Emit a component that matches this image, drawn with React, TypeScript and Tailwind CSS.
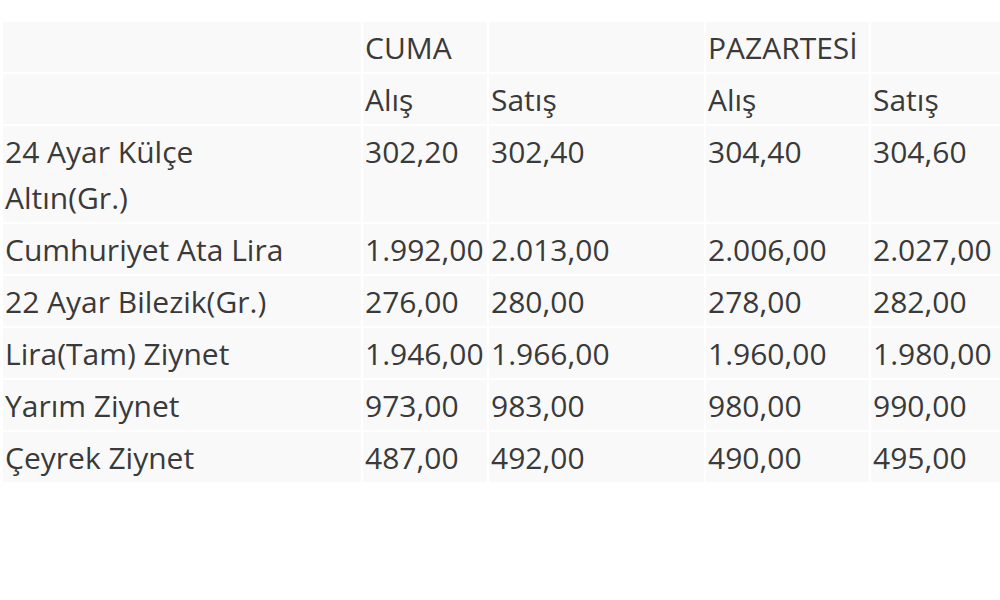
import React from "react";

const rows: [string, string, string, string, string][] = [
  ["24 Ayar Külçe Altın(Gr.)", "302,20", "302,40", "304,40", "304,60"],
  ["Cumhuriyet Ata Lira", "1.992,00", "2.013,00", "2.006,00", "2.027,00"],
  ["22 Ayar Bilezik(Gr.)", "276,00", "280,00", "278,00", "282,00"],
  ["Lira(Tam) Ziynet", "1.946,00", "1.966,00", "1.960,00", "1.980,00"],
  ["Yarım Ziynet", "973,00", "983,00", "980,00", "990,00"],
  ["Çeyrek Ziynet", "487,00", "492,00", "490,00", "495,00"],
];

const td = "bg-[#f9f9f9] px-[2px] pt-[3px] pb-px align-top leading-[46px] overflow-hidden whitespace-nowrap";

export default function App() {
  return (
    <div
      className="w-[1000px] h-[600px] overflow-hidden bg-white text-[#3a3a3a] text-[30px]"
      style={{ fontFamily: '"Open Sans", "Noto Sans", sans-serif' }}
    >
      <table className="mt-5 ml-px border-separate border-spacing-[2px] table-fixed w-[1160px]">
        <colgroup>
          <col className="w-[358px]" />
          <col className="w-[124px]" />
          <col className="w-[215px]" />
          <col className="w-[163px]" />
          <col className="w-[290px]" />
        </colgroup>
        <tbody>
          <tr>
            <td className={td}></td>
            <td className={td}>CUMA</td>
            <td className={td}></td>
            <td className={td}>PAZARTESİ</td>
            <td className={td}></td>
          </tr>
          <tr>
            <td className={td}></td>
            <td className={td}>Alış</td>
            <td className={td}>Satış</td>
            <td className={td}>Alış</td>
            <td className={td}>Satış</td>
          </tr>
          {rows.map((r) => (
            <tr key={r[0]}>
              <td className={td}>
                {r[0] === "24 Ayar Külçe Altın(Gr.)" ? (
                  <>
                    24 Ayar Külçe
                    <br />
                    Altın(Gr.)
                  </>
                ) : (
                  r[0]
                )}
              </td>
              <td className={td}>{r[1]}</td>
              <td className={td}>{r[2]}</td>
              <td className={td}>{r[3]}</td>
              <td className={td}>{r[4]}</td>
            </tr>
          ))}
        </tbody>
      </table>
    </div>
  );
}
